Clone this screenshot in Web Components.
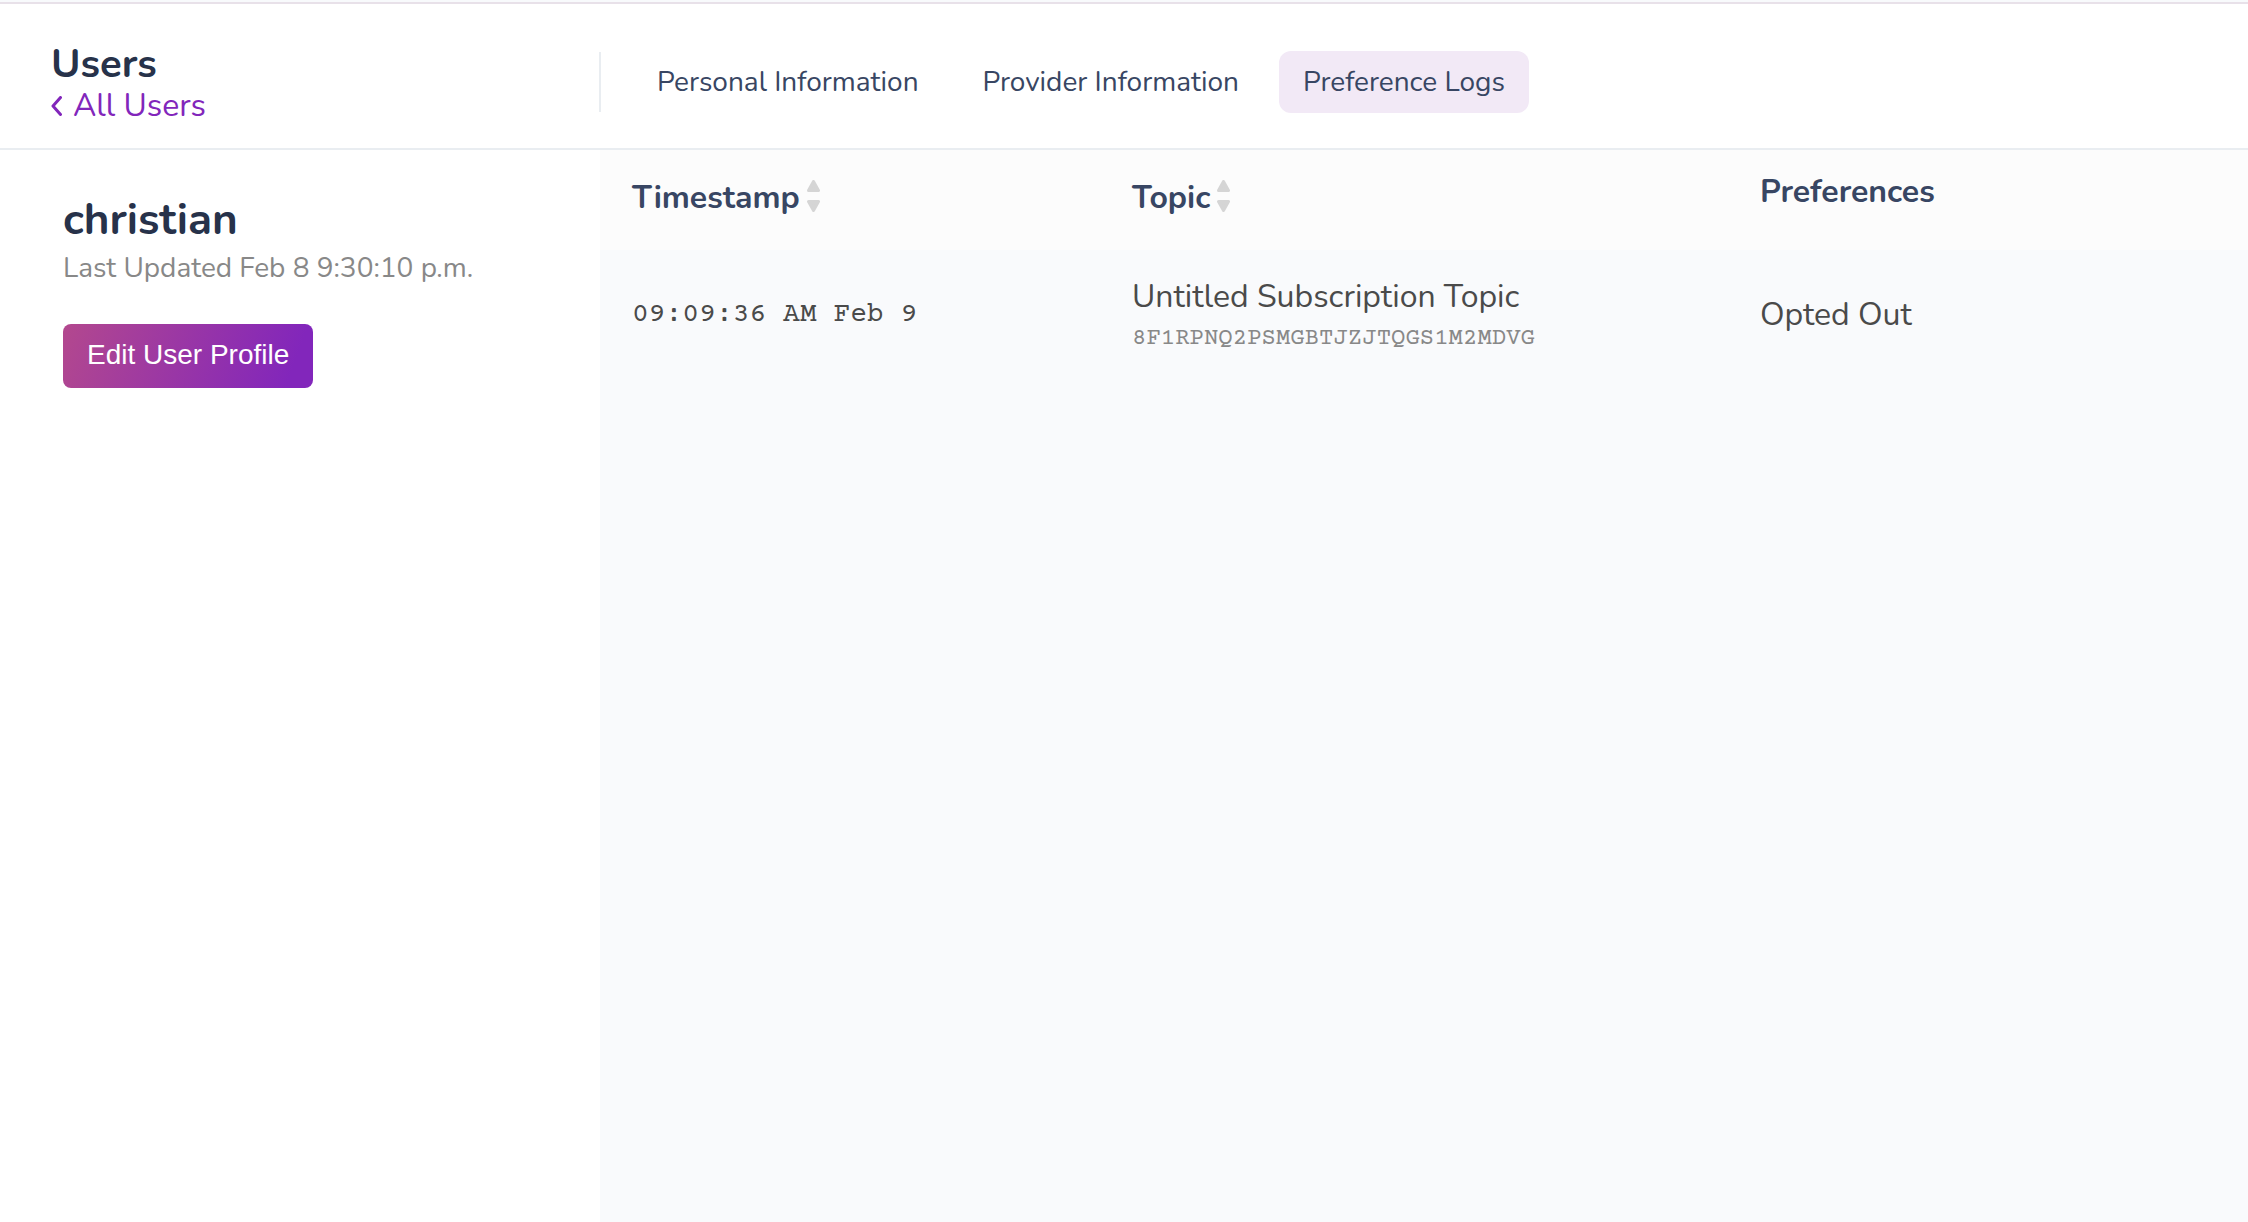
<!DOCTYPE html>
<html lang="en">
<head>
<meta charset="utf-8">
<title>Users</title>
<style>
  :root {
    --ink: #27324a;
    --navy: #384663;
    --purple: #8226bb;
    --line: #e9edf1;
    --ui: Nunito, Lato, sans-serif;
    --mono: "Courier Prime", "Courier 10 Pitch", "Liberation Mono", monospace;
  }
  body { margin: 0; background: #fff; font-family: var(--ui); font-size: 32px; line-height: 44px; color: #4a4a4a; }
</style>
</head>
<body>
<user-page>
  <page-header slot="header">
    <back-title slot="title" heading="Users" href="#users">All Users</back-title>
    <tab-bar>
      <tab-link href="#personal">Personal Information</tab-link>
      <tab-link href="#provider">Provider Information</tab-link>
      <tab-link href="#logs" active>Preference Logs</tab-link>
    </tab-bar>
  </page-header>
  <profile-card slot="aside" name="christian" updated="Last Updated Feb 8 9:30:10 p.m.">Edit User Profile</profile-card>
  <log-table></log-table>
</user-page>

<script>
const define = (name, html, setup) => customElements.define(name, class extends HTMLElement {
  constructor() {
    super();
    this.attachShadow({ mode: "open" }).innerHTML = html;
  }
  connectedCallback() {
    if (setup) setup(this, this.shadowRoot);
  }
});

define("user-page", `
  <style>
    :host { display: flex; flex-direction: column; min-height: 100vh; }
    .strip { height: 2px; background: #f8fafc; border-bottom: 2px solid #e8e1e9; }
    .body { flex: 1; display: grid; grid-template-columns: 600px 1fr; }
    main { background: #f9fafc; }
  </style>
  <div class="strip"></div>
  <slot name="header"></slot>
  <div class="body">
    <aside><slot name="aside"></slot></aside>
    <main><slot></slot></main>
  </div>`);

define("page-header", `
  <style>
    :host { display: block; }
    header { display: grid; grid-template-columns: 599px 1fr; align-items: center; box-sizing: border-box; height: 146px; padding-top: 12px; border-bottom: 2px solid var(--line); }
  </style>
  <header><slot name="title"></slot><slot></slot></header>`);

define("back-title", `
  <style>
    :host { display: block; padding: 6px 51px 0; }
    h1 { margin: 0; font-size: 40px; line-height: 42px; font-weight: 700; color: var(--ink); }
    a { display: flex; align-items: center; gap: 11px; width: max-content; color: var(--purple); text-decoration: none; line-height: 42px; }
    svg { width: 11px; height: 20px; fill: none; stroke: currentColor; stroke-width: 3; stroke-linecap: round; stroke-linejoin: round; }
  </style>
  <h1></h1>
  <a><svg viewBox="0 0 11 20" aria-hidden="true"><path d="M9.500 1.500L2 10l7.500 8.500"/></svg><slot></slot></a>`,
  (el, root) => {
    root.querySelector("h1").textContent = el.getAttribute("heading");
    root.querySelector("a").href = el.getAttribute("href");
  });

define("tab-bar", `
  <style>
    :host { display: block; }
    nav { display: flex; align-items: center; gap: 16px; height: 60px; padding-left: 32px; border-left: 2px solid var(--line); }
  </style>
  <nav><slot></slot></nav>`);

define("tab-link", `
  <style>
    :host { display: block; }
    a { display: block; padding: 0 24px; border-radius: 12px; font-size: 28px; line-height: 62px; color: var(--navy); text-decoration: none; white-space: nowrap; }
    :host([active]) a { background: #f2e9f6; }
  </style>
  <a><slot></slot></a>`,
  (el, root) => {
    const a = root.querySelector("a");
    a.href = el.getAttribute("href");
    if (el.hasAttribute("active")) a.setAttribute("aria-current", "page");
  });

define("profile-card", `
  <style>
    :host { display: block; padding: 44px 63px; }
    h2 { margin: 0; font-size: 44px; line-height: 52px; font-weight: 700; color: var(--ink); }
    p { margin: 0 0 34px; font-size: 28px; line-height: 44px; color: #888; }
    button { height: 64px; padding: 0 24px 2px; border: 0; border-radius: 8px; color: #fff; font: 28px "Liberation Sans", Arial, sans-serif; background: linear-gradient(110deg, #b3488e, #8226bb 90%); }
  </style>
  <h2></h2>
  <p></p>
  <button type="button"><slot></slot></button>`,
  (el, root) => {
    root.querySelector("h2").textContent = el.getAttribute("name");
    root.querySelector("p").textContent = el.getAttribute("updated");
  });

define("sort-button", `
  <style>
    :host { display: block; }
    button { display: flex; align-items: center; gap: 7px; padding: 0; border: 0; background: none; font: inherit; color: inherit; }
    svg { width: 13px; height: 32px; margin-bottom: 4px; fill: #d5d5d5; stroke: #d5d5d5; stroke-width: 3; stroke-linejoin: round; }
  </style>
  <button type="button"><slot></slot><svg viewBox="0 0 13 32" aria-hidden="true"><path d="M6.500 1.500L11.500 10.500H1.500ZM6.500 30.500L11.500 21.500H1.500Z"/></svg></button>`);

define("log-table", `
  <style>
    :host { display: block; }
    table { width: 100%; border-collapse: collapse; table-layout: fixed; }
    col.time { width: 500px; }
    col.topic { width: 628px; }
    th { box-sizing: border-box; height: 100px; padding: 20px 32px 0; vertical-align: top; text-align: left; font-weight: 700; color: var(--navy); background: #fcfcfc; }
    sort-button { padding-top: 6px; }
    td { padding: 25px 32px 19px; vertical-align: middle; }
    .time { font-family: var(--mono); font-size: 28px; }
    .id { display: block; margin-top: 4px; font-family: var(--mono); font-size: 24px; line-height: 32px; color: #888; }
  </style>
  <table>
    <colgroup><col class="time"><col class="topic"><col></colgroup>
    <thead>
      <tr>
        <th scope="col"><sort-button>Timestamp</sort-button></th>
        <th scope="col"><sort-button>Topic</sort-button></th>
        <th scope="col">Preferences</th>
      </tr>
    </thead>
    <tbody>
      <tr>
        <td class="time">09:09:36 AM Feb 9</td>
        <td>Untitled Subscription Topic<span class="id">8F1RPNQ2PSMGBTJZJTQGS1M2MDVG</span></td>
        <td>Opted Out</td>
      </tr>
    </tbody>
  </table>`);
</script>
</body>
</html>
